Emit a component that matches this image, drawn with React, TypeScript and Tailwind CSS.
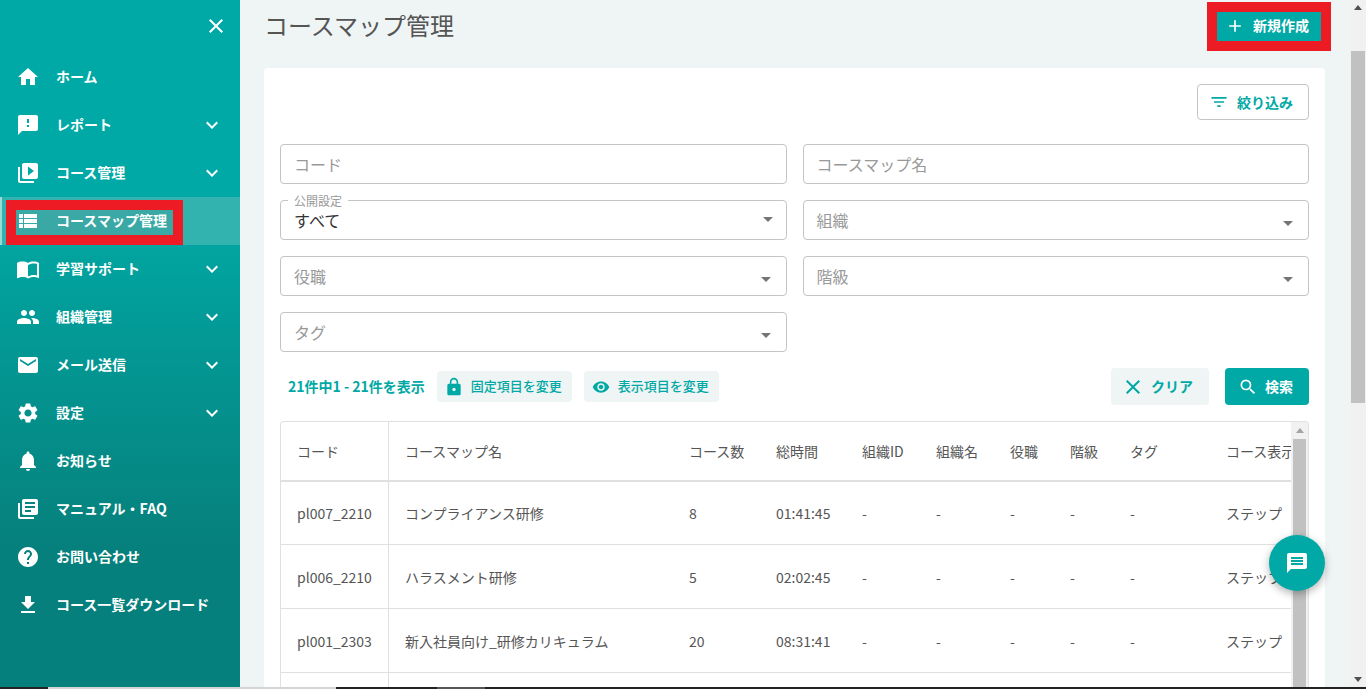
import {
  MdAdd,
  MdArrowDropDown,
  MdClose,
  MdEmail,
  MdExpandMore,
  MdFeedback,
  MdFileDownload,
  MdFilterList,
  MdHelp,
  MdHome,
  MdImportContacts,
  MdLibraryBooks,
  MdLock,
  MdMessage,
  MdNotifications,
  MdPeople,
  MdSearch,
  MdSettings,
  MdVideoLibrary,
  MdViewList,
  MdVisibility,
} from "react-icons/md";

const navItems = [
  { label: "ホーム", icon: MdHome },
  { label: "レポート", icon: MdFeedback, more: true },
  { label: "コース管理", icon: MdVideoLibrary, more: true },
  { label: "コースマップ管理", icon: MdViewList, active: true },
  { label: "学習サポート", icon: MdImportContacts, more: true },
  { label: "組織管理", icon: MdPeople, more: true },
  { label: "メール送信", icon: MdEmail, more: true },
  { label: "設定", icon: MdSettings, more: true },
  { label: "お知らせ", icon: MdNotifications },
  { label: "マニュアル・FAQ", icon: MdLibraryBooks },
  { label: "お問い合わせ", icon: MdHelp },
  { label: "コース一覧ダウンロード", icon: MdFileDownload },
];

const rows = [
  ["pl007_2210", "コンプライアンス研修", "8", "01:41:45"],
  ["pl006_2210", "ハラスメント研修", "5", "02:02:45"],
  ["pl001_2303", "新入社員向け_研修カリキュラム", "20", "08:31:41"],
];

const headers = ["コード", "コースマップ名", "コース数", "総時間", "組織ID", "組織名", "役職", "階級", "タグ", "コース表示"];

function Sidebar() {
  return (
    <aside className="w-[240px] shrink-0 bg-gradient-to-b from-[#00a9a5] from-30% to-[#06807c] to-80% text-white">
      <div className="flex h-[53px] items-start justify-end pr-3 pt-[14px]">
        <MdClose size={24} />
      </div>
      <nav className="flex flex-col">
        {navItems.map((item) => (
          <div
            key={item.label}
            className={
              item.active
                ? "flex h-12 items-center border-l-2 border-[#9adad8] bg-[#33b3af] pl-[14px] pr-4"
                : "flex h-12 items-center px-4"
            }
          >
            {item.active ? (
              <span className="mt-[3px] flex h-[25px] w-[157px] items-center gap-4 bg-[#3aa9a6] pb-[3px] outline outline-[10px] outline-[#ed1c24]">
                <item.icon size={24} className="shrink-0" />
                <span className="mb-[2px] text-sm font-bold">{item.label}</span>
              </span>
            ) : (
              <>
                <item.icon size={24} className="shrink-0" />
                <span className="mb-[2px] ml-4 flex-1 text-sm font-bold">{item.label}</span>
                {item.more && <MdExpandMore size={24} />}
              </>
            )}
          </div>
        ))}
      </nav>
    </aside>
  );
}

function SelectField({ label, value }: { label: string; value?: boolean }) {
  return (
    <div className={`relative flex h-10 items-center justify-between rounded border border-[#c4c4c4] pl-[13px] text-base ${value ? "pr-[6px]" : "pr-[8px]"}`}>
      {value && (
        <span className="absolute -top-[8px] left-[7px] bg-white px-[6px] text-xs leading-[16px] text-[#999]">公開設定</span>
      )}
      <span className={value ? "text-[#333]" : "text-[#999]"}>{value ? "すべて" : label}</span>
      <MdArrowDropDown size={24} className={value ? "-mt-[2px] text-[#757575]" : "mt-[5px] text-[#757575]"} />
    </div>
  );
}

function TextField({ label }: { label: string }) {
  return (
    <div className="flex h-10 items-center rounded border border-[#c4c4c4] pl-[13px] text-base text-[#999]">
      {label}
    </div>
  );
}

function DataTable() {
  const cols = "grid grid-cols-[108px_284px_87px_86px_74px_74px_60px_60px_96px_100px]";
  return (
    <div className="mt-4 flex h-[400px] overflow-hidden rounded-t border-l border-r border-t border-[#e0e0e0] text-sm text-[#555]">
      <div className="min-w-0 flex-1 overflow-hidden">
        <div className={`${cols} h-[60px] items-center border-b-2 border-[#e0e0e0]`}>
          {headers.map((h, i) => (
            <div
              key={h}
              className={i === 0 ? "flex h-full items-center whitespace-nowrap border-r border-[#e0e0e0] pl-4" : "whitespace-nowrap pl-4"}
            >
              {h}
            </div>
          ))}
        </div>
        {rows.map((row, i) => (
          <div key={row[0]} className={`${cols} ${i === 0 ? "h-[63px]" : "h-16"} items-center border-b border-[#e0e0e0]`}>
            <div className="flex h-full items-center border-r border-[#e0e0e0] pl-4">{row[0]}</div>
            <div className="whitespace-nowrap pl-4">{row[1]}</div>
            <div className="pl-4">{row[2]}</div>
            <div className="pl-4">{row[3]}</div>
            {["a", "b", "c", "d", "e"].map((k) => (
              <div key={k} className="pl-4">-</div>
            ))}
            <div className="whitespace-nowrap pl-4">ステップ</div>
          </div>
        ))}
        <div className={`${cols} h-16`}>
          <div className="h-full border-r border-[#e0e0e0]" />
        </div>
      </div>
      <div className="flex w-[17px] shrink-0 flex-col items-center bg-[#f1f1f1]">
        <div className="mt-[6px] h-0 w-0 border-x-[4px] border-b-[5px] border-x-transparent border-b-[#a3a3a3]" />
        <div className="mt-[6px] w-[13px] flex-1 bg-[#c1c1c1]" />
      </div>
    </div>
  );
}

function Card() {
  return (
    <div className="flex-1 rounded-t bg-white p-4">
      <div className="flex justify-end">
        <button className="flex h-9 w-[112px] items-center gap-2 rounded border border-[#c4c4c4] pl-[11px] text-sm font-bold text-[#00a9a5]">
          <MdFilterList size={20} />
          絞り込み
        </button>
      </div>
      <div className="mt-6 grid grid-cols-2 gap-4">
        <TextField label="コード" />
        <TextField label="コースマップ名" />
        <SelectField label="公開設定" value />
        <SelectField label="組織" />
        <SelectField label="役職" />
        <SelectField label="階級" />
        <SelectField label="タグ" />
      </div>
      <div className="mt-4 flex h-[37px] items-center text-[13px]">
        <span className="mb-[2px] ml-2 text-sm font-bold text-[#00a9a5]">21件中1 - 21件を表示</span>
        <button className="ml-3 flex h-[31px] w-[135px] items-center gap-[7px] rounded bg-[#eff4f4] pl-[7px] font-medium text-[#00a9a5]">
          <MdLock size={20} />
          <span className="mb-[2px]">固定項目を変更</span>
        </button>
        <button className="ml-3 flex h-[31px] w-[135px] items-center gap-2 rounded bg-[#eff4f4] pl-2 font-medium text-[#00a9a5]">
          <MdVisibility size={18} />
          <span className="mb-[2px]">表示項目を変更</span>
        </button>
        <div className="flex-1" />
        <button className="flex h-[37px] w-[98px] items-center gap-[6px] rounded bg-[#eff4f4] pl-[10px] text-sm font-bold text-[#00a9a5]">
          <MdClose size={24} />
          <span className="mb-[2px]">クリア</span>
        </button>
        <button className="ml-4 flex h-[37px] w-[84px] items-center gap-[7px] rounded bg-[#00a9a5] pl-[13px] text-sm font-bold text-white">
          <MdSearch size={20} />
          <span className="mb-[2px]">検索</span>
        </button>
      </div>
      <DataTable />
    </div>
  );
}

function PageScrollbar() {
  return (
    <div className="flex w-4 shrink-0 flex-col items-center bg-[#f1f1f1]">
      <div className="mt-[5px] h-0 w-0 border-x-[4px] border-b-[5px] border-x-transparent border-b-[#505050]" />
      <div className="mt-[41px] h-[352px] w-[14px] bg-[#c1c1c1]" />
      <div className="mt-auto mb-[5px] h-0 w-0 border-x-[4px] border-t-[5px] border-x-transparent border-t-[#505050]" />
    </div>
  );
}

export default function App() {
  return (
    <div
      className="relative flex h-[689px] w-[1366px] flex-col overflow-hidden bg-[#eff4f4]"
      style={{ fontFamily: '"Noto Sans CJK JP", "Noto Sans", sans-serif' }}
    >
      <div className="flex min-h-0 flex-1">
        <Sidebar />
        <main className="flex min-w-0 flex-1 flex-col pl-6 pr-[25px]">
          <header className="flex h-[68px] shrink-0 items-start justify-between">
            <h1 className="pt-[7px] text-2xl leading-[36px] text-[#555]">コースマップ管理</h1>
            <button className="mr-[4px] mt-3 flex h-[29px] w-[104px] items-center gap-2 bg-[#00a9a5] pb-[2px] pl-2 text-sm font-bold text-white outline outline-[10px] outline-[#ed1c24]">
              <MdAdd size={20} />
              <span className="mb-[2px]">新規作成</span>
            </button>
          </header>
          <Card />
        </main>
        <PageScrollbar />
      </div>
      <div className="flex h-[2px] shrink-0 bg-[#222]">
        <div className="ml-12 w-[288px] bg-[#d4d4d4]" />
        <div className="ml-[101px] w-12 bg-[#555]" />
      </div>
      {/* chat button */}
      <button className="absolute left-[1269px] top-[535px] flex h-14 w-14 items-center justify-center rounded-full bg-[#00a9a5] text-white shadow-[0_3px_8px_rgba(0,0,0,0.3)]">
        <MdMessage size={24} />
      </button>
    </div>
  );
}
